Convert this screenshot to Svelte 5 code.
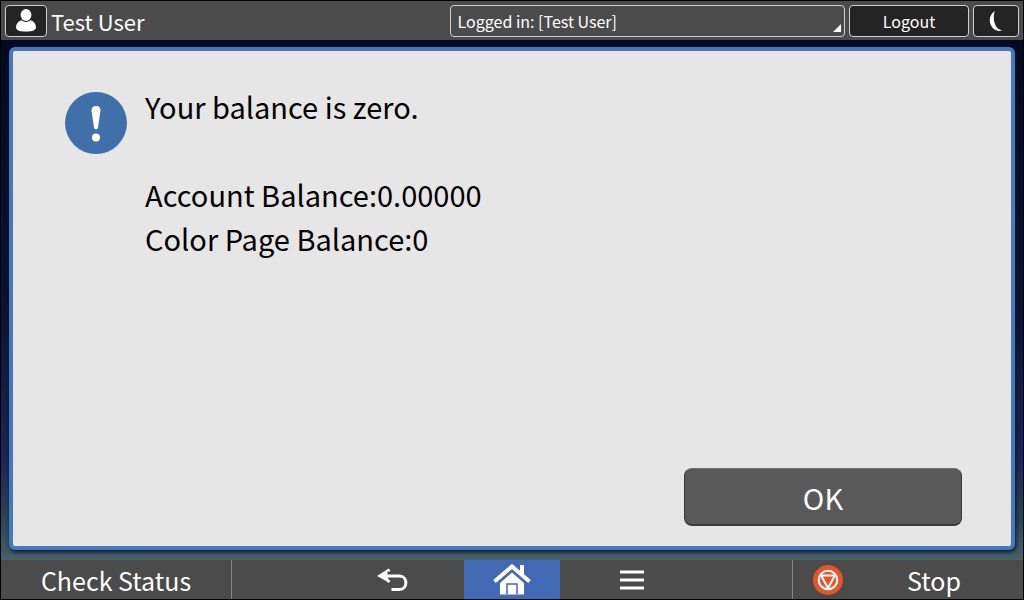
<script>
  let login = $state('Logged in: [Test User]');
</script>

<div class="screen">
  <header>
    <button class="key avatar" aria-label="User">
      <svg width="20" height="23" viewBox="0 0 20 23" fill="#fff" aria-hidden="true">
        <ellipse cx="10" cy="6" rx="5.4" ry="6" />
        <path d="M5.5 11.2Q10 14.8 14.5 11.2C18 12.2 20 15 20 18.2C20 21 17 22.5 10 22.5S0 21 0 18.2C0 15 2 12.2 5.5 11.2Z" />
      </svg>
    </button>
    <span class="user">Test User</span>
    <div class="picker">
      <select class="key" aria-label="Login status" bind:value={login}>
        <option>Logged in: [Test User]</option>
      </select>
      <svg width="8" height="8" viewBox="0 0 8 8" aria-hidden="true"><path d="M8 0V8H0Z" fill="#fff" /></svg>
    </div>
    <button class="key logout">Logout</button>
    <button class="key sleep" aria-label="Sleep">
      <svg width="14" height="20" viewBox="0 0 14 20" aria-hidden="true">
        <path d="M6 0C.8 3 -.6 9.500 2 14.500C4.200 18.800 9 21 13 19.300C8.500 18.500 6 14.800 5.200 10.500C4.500 6.500 4.500 3.300 6 0Z" fill="#fff" />
      </svg>
    </button>
  </header>

  <main>
    <section class="dialog">
      <div class="message">
        <svg class="alert" width="62" height="62" viewBox="0 0 62 62" aria-hidden="true">
          <circle cx="31" cy="31" r="31" fill="#416fa9" />
          <path d="M26.500 18.500Q26.500 14 31 14T35.500 18.500L33 35.500Q32.600 37.500 31 37.500T29 35.500Z" fill="#fff" />
          <circle cx="31" cy="45.500" r="4" fill="#fff" />
        </svg>
        <div class="text">
          <p>Your balance is zero.</p>
          <p class="group">Account Balance:0.00000</p>
          <p>Color Page Balance:0</p>
        </div>
      </div>
      <button class="ok">OK</button>
    </section>
  </main>

  <footer>
    <button class="status">Check Status</button>
    <nav>
      <button class="back" aria-label="Back">
        <svg width="31" height="24" viewBox="0 0 31 24" fill="none" aria-hidden="true">
          <path d="M8 8H22.500C31 8 31 21.500 22.500 21.500H14.500" stroke="#fff" stroke-width="3" />
          <path d="M12.500 1.500L6 8L12.500 14" stroke="#fff" stroke-width="3" />
          <path d="M0 8L11 1V14Z" fill="#fff" />
          <path d="M14 5L10.500 6.500V3Z" fill="#4b4b4c" />
        </svg>
      </button>
      <button class="home" aria-label="Home">
        <svg width="38" height="31" viewBox="0 0 38 31" aria-hidden="true">
          <path d="M1.500 17.500L19 2.500L36.500 17.500" fill="none" stroke="#fff" stroke-width="4" />
          <path d="M27 1H31V12L27 8.500Z" fill="#fff" />
          <path d="M19 8.500L31 19V30.500H7V19Z" fill="#fff" />
          <path d="M14 30.500V20H24V30.500" fill="none" stroke="#4269b3" stroke-width="1.500" />
        </svg>
      </button>
      <button class="menu" aria-label="Menu">
        <svg width="24" height="20" viewBox="0 0 24 20" aria-hidden="true">
          <path d="M0 2H24M0 10H24M0 18H24" stroke="#fff" stroke-width="3" />
        </svg>
      </button>
    </nav>
    <button class="stop">
      <svg width="30" height="30" viewBox="0 0 30 30" fill="none" stroke="#fff" stroke-width="2" aria-hidden="true">
        <circle cx="15" cy="15" r="15" fill="#e4562a" stroke="none" />
        <circle cx="15" cy="15" r="9.300" />
        <path d="M8 10.500H22L15 23Z" stroke-linejoin="round" />
      </svg>
      <span>Stop</span>
    </button>
  </footer>
</div>

<style>
  :global(body) {
    margin: 0;
    background: #000;
  }
  .screen {
    box-sizing: border-box;
    min-height: 100vh;
    display: flex;
    flex-direction: column;
    border: 1px solid #000;
    color: #fff;
    background: #000;
    font-family: "Noto Sans CJK JP", "Noto Sans", sans-serif;
  }
  button,
  select {
    box-sizing: border-box;
    margin: 0;
    padding: 0;
    border: 0;
    color: inherit;
    background: none;
    font-family: inherit;
  }
  svg {
    display: block;
    flex: none;
  }
  header {
    display: flex;
    align-items: center;
    gap: 4px;
    height: 39px;
    padding: 0 4px;
    background: #4b4b4c;
  }
  .key {
    height: 32px;
    border: 1px solid #d0d0d0;
    border-radius: 4px;
    background: #242424;
    font-size: 16px;
    line-height: 24px;
  }
  .avatar,
  .sleep {
    display: flex;
    align-items: center;
    justify-content: center;
  }
  .avatar {
    width: 42px;
  }
  .sleep {
    width: 46px;
  }
  .user {
    flex: 1;
    font-size: 22px;
    line-height: 32px;
  }
  .picker {
    position: relative;
    width: 39%;
  }
  .picker select {
    display: block;
    width: 100%;
    padding: 0 7px;
    appearance: none;
    background: #4b4b4c;
  }
  .picker svg {
    position: absolute;
    right: 4px;
    bottom: 5px;
    pointer-events: none;
  }
  .logout {
    width: 120px;
  }
  main {
    flex: 1;
    display: flex;
    padding: 7px 8px 10px;
    background: linear-gradient(#050a22, #0a1233 50%, #1b2459 80%, #294558 92%, #48616a);
  }
  .dialog {
    flex: 1;
    display: flex;
    flex-direction: column;
    justify-content: space-between;
    gap: 24px;
    padding: 33px 49px 20px 52px;
    border: 4px solid #4678bb;
    border-radius: 6px;
    color: #000;
    background: #e6e6e6;
    box-shadow: 1px 2px 4px #061528;
  }
  .message {
    display: flex;
    align-items: flex-start;
    gap: 18px;
  }
  .alert {
    margin-top: 8px;
  }
  .text {
    font-size: 29px;
    line-height: 44px;
  }
  p {
    margin: 0;
  }
  .group {
    margin-top: 44px;
  }
  .ok {
    align-self: flex-end;
    width: 278px;
    height: 58px;
    border: 1px solid #3c3c3c;
    border-top-color: #707070;
    border-bottom-width: 2px;
    border-radius: 8px;
    color: #fff;
    background: #595959;
    font-size: 29px;
    line-height: 44px;
  }
  footer {
    display: grid;
    grid-template-columns: 230px 1fr 230px;
    height: 39px;
    background: #4b4b4c;
  }
  footer button {
    font-size: 25px;
    line-height: 38px;
  }
  nav {
    display: flex;
    justify-content: center;
    border: solid #858585;
    border-width: 0 1px;
  }
  nav button {
    display: flex;
    align-items: center;
    justify-content: center;
  }
  .back,
  .menu {
    width: 144px;
  }
  .home {
    width: 96px;
    background: #4269b3;
  }
  .stop {
    display: flex;
    align-items: center;
    padding: 0 20px;
  }
  .stop span {
    flex: 1;
    padding-left: 22px;
  }
</style>
